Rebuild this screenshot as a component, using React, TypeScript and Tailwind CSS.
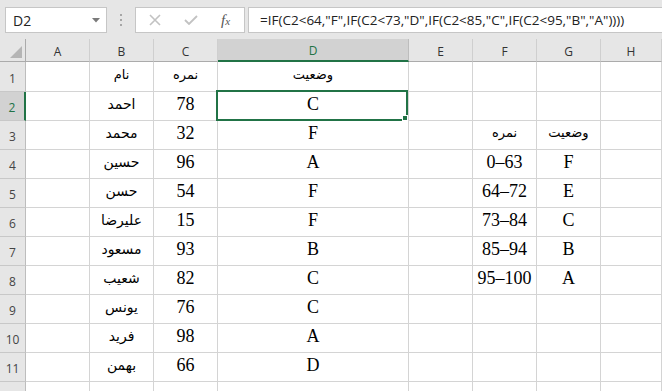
import React from "react";

const cols = ["A", "B", "C", "D", "E", "F", "G", "H"];

const students = [
  { name: "احمد", score: "78", grade: "C" },
  { name: "محمد", score: "32", grade: "F" },
  { name: "حسین", score: "96", grade: "A" },
  { name: "حسن", score: "54", grade: "F" },
  { name: "علیرضا", score: "15", grade: "F" },
  { name: "مسعود", score: "93", grade: "B" },
  { name: "شعیب", score: "82", grade: "C" },
  { name: "یونس", score: "76", grade: "C" },
  { name: "فرید", score: "98", grade: "A" },
  { name: "بهمن", score: "66", grade: "D" },
];

// rows 3..8 of the lookup table in F:G
const lookup: Record<number, [string, string]> = {
  3: ["نمره", "وضعیت"],
  4: ["0–63", "F"],
  5: ["64–72", "E"],
  6: ["73–84", "C"],
  7: ["85–94", "B"],
  8: ["95–100", "A"],
};

const gridCols = "grid grid-cols-[26px_64px_64px_64px_191px_64px_64px_64px_1fr]";
const ui = "font-['Open_Sans','Liberation_Sans',sans-serif]";

function Fa({ children, small }: { children: React.ReactNode; small?: boolean }) {
  return (
    <span dir="rtl" className={`font-['DejaVu_Sans',sans-serif] ${small ? "text-[13px]" : "text-[14px]"} leading-[20px]`}>
      {children}
    </span>
  );
}

function Cell({ children, selected }: { children?: React.ReactNode; selected?: boolean }) {
  return (
    <div className="relative flex items-end justify-center border-r border-b border-[#d4d4d4] pb-[6px] text-[18px] leading-[20px] text-black">
      {children}
      {selected && (
        <div className="absolute -left-[2px] -top-[2px] right-0 -bottom-[1px] z-10 border-2 border-[#217346]">
          <div className="absolute -right-[2px] -bottom-[2px] h-[6px] w-[6px] border border-white bg-[#217346]" />
        </div>
      )}
    </div>
  );
}

function RowHead({ n, active }: { n?: number; active?: boolean }) {
  return (
    <div
      className={`${ui} flex items-end justify-center pb-[5px] text-[12px] leading-[14px] border-b border-[#c8c8c8] ${
        active
          ? "bg-[#d2d2d2] text-[#217346] border-r-2 border-r-[#217346]"
          : "bg-[#e6e6e6] text-[#444] border-r border-r-[#bdbdbd]"
      }`}
    >
      {n}
    </div>
  );
}

export default function App() {
  return (
    <div className="h-[391px] w-[662px] overflow-hidden bg-white font-['Liberation_Serif','DejaVu_Sans',serif]">
      {/* formula bar */}
      <div className={`${ui} flex h-[39px] items-start gap-0 bg-[#e6e6e6] pt-[7px]`}>
        <div className="ml-[5px] flex h-[26px] w-[102px] items-center justify-between border border-[#c6c6c6] bg-white pl-[7px] pr-[6px] text-[14px] text-[#222]">
          <span>D2</span>
          <svg width="8" height="5" viewBox="0 0 8 5">
            <path d="M0 0 H8 L4 4.5 Z" fill="#7a7a7a" />
          </svg>
        </div>
        <div className="ml-[13px] mt-[7px] flex h-[12px] flex-col justify-between">
          <span className="h-[2px] w-[2px] bg-[#a6a6a6]" />
          <span className="h-[2px] w-[2px] bg-[#a6a6a6]" />
          <span className="h-[2px] w-[2px] bg-[#a6a6a6]" />
        </div>
        <div className="ml-[13px] flex h-[26px] w-[110px] items-center border border-[#c6c6c6] bg-white">
          <svg className="ml-[13px]" width="12" height="12" viewBox="0 0 12 12">
            <path d="M1 1 L11 11 M11 1 L1 11" stroke="#c2c2c2" strokeWidth="1.6" />
          </svg>
          <svg className="ml-[23px]" width="14" height="10" viewBox="0 0 14 10">
            <path d="M1 5 L5 9 L13 1" stroke="#c2c2c2" strokeWidth="1.8" fill="none" />
          </svg>
          <span className="ml-[23px] font-['Liberation_Serif',serif] text-[15px] italic leading-none text-[#555]">
            f<span className="text-[11px]">x</span>
          </span>
        </div>
        <div className="ml-[3px] flex h-[26px] flex-1 items-center border-y border-l border-[#c6c6c6] bg-white pl-[11px] text-[13.5px] text-[#222] whitespace-nowrap">
          =IF(C2&lt;64,"F",IF(C2&lt;73,"D",IF(C2&lt;85,"C",IF(C2&lt;95,"B","A"))))
        </div>
      </div>

      {/* column headers */}
      <div className={`${gridCols} ${ui} h-[23px] bg-[#e6e6e6] text-[12px] text-[#333]`}>
        <div className="relative border-r border-b border-[#ababab]">
          <svg className="absolute right-[3px] bottom-[3px]" width="12" height="12" viewBox="0 0 12 12">
            <path d="M12 0 V12 H0 Z" fill="#b5b5b5" />
          </svg>
        </div>
        {cols.map((c) =>
          c === "D" ? (
            <div key={c} className="flex items-center justify-center border-r border-[#bdbdbd] border-b-2 border-b-[#217346] bg-[#d2d2d2] pt-[3px] text-[#217346]">
              {c}
            </div>
          ) : (
            <div key={c} className="flex items-center justify-center border-r border-b border-r-[#cfcfcf] border-b-[#ababab] pt-[4px]">
              {c}
            </div>
          )
        )}
      </div>

      {/* row 1 */}
      <div className={`${gridCols} h-[30px]`}>
        <RowHead n={1} />
        <Cell />
        <Cell><Fa small>نام</Fa></Cell>
        <Cell><Fa small>نمره</Fa></Cell>
        <Cell><Fa small>وضعیت</Fa></Cell>
        <Cell />
        <Cell />
        <Cell />
        <Cell />
      </div>

      {students.map((s, i) => {
        const row = i + 2;
        const lk = lookup[row];
        return (
          <div key={row} className={`${gridCols} h-[29px]`}>
            <RowHead n={row} active={row === 2} />
            <Cell />
            <Cell><Fa>{s.name}</Fa></Cell>
            <Cell>{s.score}</Cell>
            <Cell selected={row === 2}>{s.grade}</Cell>
            <Cell />
            <Cell>{lk ? row === 3 ? <Fa small>{lk[0]}</Fa> : lk[0] : null}</Cell>
            <Cell>{lk ? row === 3 ? <Fa small>{lk[1]}</Fa> : lk[1] : null}</Cell>
            <Cell />
          </div>
        );
      })}

      {/* row 12, only its top edge is in view */}
      <div className={`${gridCols} h-[29px]`}>
        <RowHead />
        <Cell />
        <Cell />
        <Cell />
        <Cell />
        <Cell />
        <Cell />
        <Cell />
        <Cell />
      </div>
    </div>
  );
}
